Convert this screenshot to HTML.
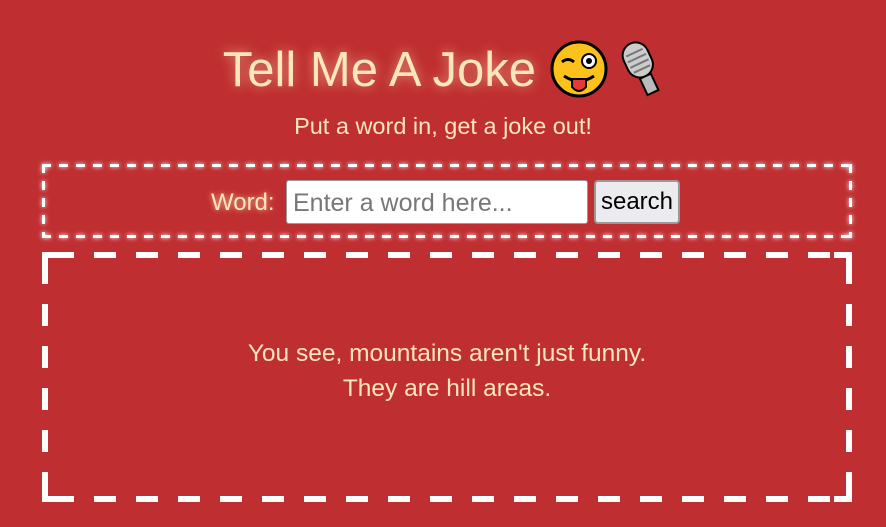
<!DOCTYPE html>
<html><head><style>
body{margin:0;width:886px;height:527px;background:#bf2e30;font-family:"Liberation Sans",sans-serif;color:#fbe6bd;overflow:hidden;position:relative}
h1{position:absolute;top:40px;left:0;width:886px;margin:0;text-align:center;font-weight:normal;font-size:49px;line-height:60px;text-shadow:0 0 12px rgba(255,230,180,.6)}
.sub{position:absolute;top:113px;width:886px;text-align:center;font-size:23.5px}
.joke{position:absolute;left:42px;top:252px;width:810px;height:250px;display:flex;align-items:center;justify-content:center;text-align:center;font-size:24.5px;line-height:35px;padding-bottom:12px;box-sizing:border-box}
.lbl{position:absolute;left:211px;top:189px;font-size:24px;text-shadow:0 0 6px rgba(255,230,180,.8)}
.inp{position:absolute;left:286px;top:180px;width:302px;height:44px;background:#fff;border:1px solid #999;border-radius:3px;color:#777;font-size:25px;line-height:44px;padding-left:6px;box-sizing:border-box}
.btn{position:absolute;left:594px;top:180px;width:86px;height:44px;background:#ececf0;border:2px solid #999;border-radius:4px;color:#000;font-size:24px;line-height:40px;text-align:center;box-sizing:border-box}
svg{vertical-align:middle}
.frame{position:absolute;left:0;top:0}
</style></head><body>
<svg class="frame" width="886" height="527">
<defs><filter id="g" x="-5%" y="-20%" width="110%" height="140%"><feGaussianBlur stdDeviation="2.5" result="b"/><feMerge><feMergeNode in="b"/><feMergeNode in="SourceGraphic"/></feMerge></filter></defs>
<g stroke="#fff" stroke-width="3" fill="none" filter="url(#g)" stroke-dasharray="9 8">
<path d="M42 165.5H852"/><path d="M42 236.5H852"/><path d="M43.5 164V238"/><path d="M850.5 164V238"/>
</g>
<g stroke="#fff" stroke-width="6" fill="none">
<path d="M42 255H852" stroke-dasharray="22 20" stroke-dashoffset="-10"/>
<path d="M42 499H852" stroke-dasharray="22 20" stroke-dashoffset="-10"/>
<path d="M45 252V502" stroke-dasharray="22 20" stroke-dashoffset="-10"/>
<path d="M849 252V502" stroke-dasharray="22 20" stroke-dashoffset="-10"/>
<path d="M45 270V255H60"/><path d="M834 255H849V270"/><path d="M45 484V499H60"/><path d="M834 499H849V484"/>
</g>
</svg>
<h1>Tell Me A Joke <svg width="58" height="58" viewBox="0 0 58 58" style="margin-top:-8px"><circle cx="29" cy="29" r="27" fill="#fcc21b" stroke="#000" stroke-width="3"/><path d="M12 22 q6-5 12 0" stroke="#000" stroke-width="3" fill="none"/><circle cx="39" cy="21" r="7" fill="#fff" stroke="#000" stroke-width="2"/><circle cx="39" cy="21" r="3" fill="#000"/><path d="M14 36 q15 10 30 0" stroke="#000" stroke-width="3" fill="none"/><path d="M22 39 v8 q7 8 14 0 v-8z" fill="#e53935" stroke="#000" stroke-width="2"/></svg> <svg width="42" height="60" viewBox="0 0 42 60" style="margin-top:-8px"><g transform="rotate(-25 21 30)"><rect x="8" y="2" width="26" height="36" rx="13" fill="#ccc" stroke="#000" stroke-width="2"/><path d="M12 12h18M11 18h20M11 24h20M12 30h18" stroke="#777" stroke-width="2"/><rect x="15" y="38" width="12" height="18" fill="#bbb" stroke="#000" stroke-width="2"/></g></svg></h1>
<div class="sub">Put a word in, get a joke out!</div>
<div class="lbl">Word:</div>
<div class="inp">Enter a word here...</div>
<div class="btn">search</div>
<div class="joke"><div>You see, mountains aren't just funny.<br>They are hill areas.</div></div>
</body></html>
